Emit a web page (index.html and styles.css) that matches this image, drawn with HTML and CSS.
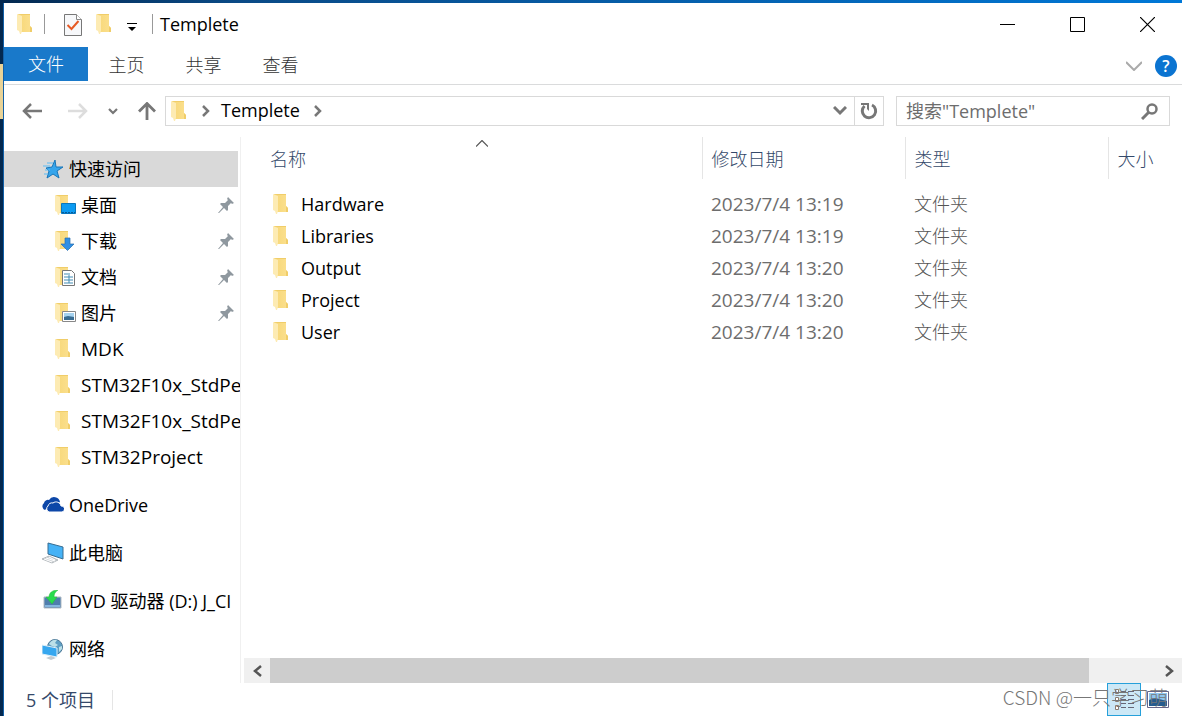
FILE: index.html
```html
<!DOCTYPE html>
<html lang="zh-CN">
<head>
<meta charset="utf-8">
<title>Templete</title>
<link rel="stylesheet" href="styles.css">
</head>
<body>
<svg class="defs" aria-hidden="true">
  <linearGradient id="gold"><stop offset="0" stop-color="#f7d777"/><stop offset="1" stop-color="#fbe08f"/></linearGradient>
  <symbol id="folder" viewBox="0 0 16 22"><path fill="url(#gold)" d="M1 1h12v12l2 2v4H4z"/><path fill="#fdebb3" d="M0 1l5 2v15l-1 3-1 0-1-3-2-1z"/><path fill="#f0cd69" d="M1 1h12v1H4zM13 13l2 2v4h-2z"/></symbol>
  <symbol id="pin" viewBox="0 0 16 16"><path fill="#8f989f" d="M10 0l6 6-2 1-1-1-3 3 0 4-1 1-3-3-5 5H0l5-6-3-3 1-1h4l3-3-1-1z"/></symbol>
</svg>
<div class="desktop">
<i class="desktop-icon"></i>
<main class="window">
  <header class="titlebar">
    <svg class="folder"><use href="#folder"/></svg>
    <i class="rule"></i>
    <button class="quick" aria-label="属性"><svg width="18" height="22" viewBox="0 0 18 22"><path d="M.5.5h12l5 5v16H.5z" fill="#f7f8fa" stroke="#777"/><path d="M12.500.5v5h5" fill="#fff" stroke="#888"/><path d="M3.500 11l4 4 7-8" fill="none" stroke="#e65a25" stroke-width="2"/></svg></button>
    <button class="quick second" aria-label="新建文件夹"><svg class="folder"><use href="#folder"/></svg></button>
    <button class="quick more" aria-label="自定义快速访问工具栏"><svg width="10" height="8" viewBox="0 0 10 8"><path d="M0 0h10v1H0zM1 4h8L5 8z"/></svg></button>
    <i class="rule"></i>
    <h1>Templete</h1>
    <div class="controls">
      <button aria-label="最小化"><svg width="15" height="15"><path d="M0 7.500h15" stroke="#000"/></svg></button>
      <button aria-label="最大化"><svg width="15" height="15"><path d="M.5.5h14v14H.5z" fill="none" stroke="#000"/></svg></button>
      <button aria-label="关闭"><svg width="15" height="15"><path d="M0 0l15 15M15 0L0 15" stroke="#000" stroke-width="1.200"/></svg></button>
    </div>
  </header>
  <nav class="ribbon">
    <button class="tab file">文件</button><button class="tab">主页</button><button class="tab">共享</button><button class="tab">查看</button>
    <button class="expand" aria-label="展开功能区"><svg width="16" height="10" viewBox="0 0 16 10"><path d="M0 1l8 8 8-8" fill="none" stroke="#aaa" stroke-width="2"/></svg></button>
    <button class="help" aria-label="帮助">?</button>
  </nav>
  <div class="address">
    <button class="nav back" aria-label="后退"><svg width="20" height="16" viewBox="0 0 20 16"><path d="M20 8H2M9 1L2 8l7 7" fill="none" stroke="#777" stroke-width="2.500"/></svg></button>
    <button class="nav forward" aria-label="前进"><svg width="20" height="16" viewBox="0 0 20 16"><path d="M0 8h18M11 1l7 7-7 7" fill="none" stroke="#ddd" stroke-width="2.500"/></svg></button>
    <button class="nav recent" aria-label="最近浏览的位置"><svg width="10" height="7" viewBox="0 0 10 7"><path d="M1 1l4 4 4-4" fill="none" stroke="#777" stroke-width="2.200"/></svg></button>
    <button class="nav up" aria-label="上移"><svg width="18" height="18" viewBox="0 0 18 18"><path d="M9 18V2M1 9.500L9 1.500l8 8" fill="none" stroke="#777" stroke-width="2.800"/></svg></button>
    <div class="crumbs">
      <svg class="folder"><use href="#folder"/></svg>
      <svg class="chev" width="8" height="12" viewBox="0 0 8 12"><path d="M1 1l5 5-5 5" fill="none" stroke="#777" stroke-width="2.500"/></svg>
      <a href="#">Templete</a>
      <svg class="chev" width="8" height="12" viewBox="0 0 8 12"><path d="M1 1l5 5-5 5" fill="none" stroke="#777" stroke-width="2.500"/></svg>
      <button class="history" aria-label="以前的位置"><svg width="14" height="10" viewBox="0 0 14 10"><path d="M1 1l6 6 6-6" fill="none" stroke="#777" stroke-width="3"/></svg></button>
      <button class="refresh" aria-label="刷新"><svg width="18" height="18" viewBox="0 0 18 18"><path d="M12 3A6.700 6.700 0 1 1 4.500 4" fill="none" stroke="#777" stroke-width="3"/><path d="M1 1h8v8L7 7V3H1z" fill="#777"/></svg></button>
    </div>
    <label class="search"><input type="text" placeholder="搜索&quot;Templete&quot;" aria-label="搜索"><svg width="17" height="17" viewBox="0 0 17 17"><circle cx="11" cy="6" r="4.500" fill="none" stroke="#777" stroke-width="2.500"/><path d="M8 9l-7 7" stroke="#777" stroke-width="3"/></svg></label>
  </div>
  <div class="content">
    <aside class="tree">
      <a href="#" class="item root selected"><svg class="icon" viewBox="0 0 22 22"><path d="M13 2l1 7h7l-6 4 2 7-6-4-6 4 2-7-3-3 6-1z" fill="#35a5ec" stroke="#1976b8"/><path d="M5 5h6M1 8h7M3 12h5M2 16h4" stroke="#5bbcf5" stroke-width="1.200"/></svg><span>快速访问</span></a>
      <a href="#" class="item"><svg class="icon" viewBox="0 0 22 22"><use href="#folder" width="16" height="22"/><path d="M6.500 9.500h14v10h-14z" fill="#0c9bf2" stroke="#0876bc"/><path d="M7 18.500h13" stroke="#075b99" stroke-dasharray="2 1"/></svg><span>桌面</span><svg class="pin"><use href="#pin"/></svg></a>
      <a href="#" class="item"><svg class="icon" viewBox="0 0 22 22"><use href="#folder" width="16" height="22"/><path d="M10 8h5v6h4l-6.500 6.500L6 14h4z" fill="#2f8fe5" stroke="#286fad" stroke-width=".7"/></svg><span>下载</span><svg class="pin"><use href="#pin"/></svg></a>
      <a href="#" class="item"><svg class="icon" viewBox="0 0 22 22"><use href="#folder" width="16" height="22"/><path d="M7.500 4.500h9l3 3v12h-12z" fill="#fff" stroke="#777"/><path d="M9 8h4M9 11h9M9 14h9M9 17h9M14 7v10" stroke="#438db5"/></svg><span>文档</span><svg class="pin"><use href="#pin"/></svg></a>
      <a href="#" class="item"><svg class="icon" viewBox="0 0 22 22"><use href="#folder" width="16" height="22"/><path d="M7.500 9.500h13v10h-13z" fill="#fff" stroke="#888"/><path d="M9 11h10v7H9z" fill="#a5d2ef"/><path d="M9 15l4-1 6 1v3H9z" fill="#376b91"/></svg><span>图片</span><svg class="pin"><use href="#pin"/></svg></a>
      <a href="#" class="item latin"><svg class="icon" viewBox="0 0 22 22"><use href="#folder" width="16" height="22"/></svg><span>MDK</span></a>
      <a href="#" class="item latin"><svg class="icon" viewBox="0 0 22 22"><use href="#folder" width="16" height="22"/></svg><span>STM32F10x_StdPe</span></a>
      <a href="#" class="item latin"><svg class="icon" viewBox="0 0 22 22"><use href="#folder" width="16" height="22"/></svg><span>STM32F10x_StdPe</span></a>
      <a href="#" class="item latin"><svg class="icon" viewBox="0 0 22 22"><use href="#folder" width="16" height="22"/></svg><span>STM32Project</span></a>
      <a href="#" class="item root"><svg class="icon" viewBox="0 0 22 22"><path d="M3 16a4 4 0 0 1-1-7 4 4 0 0 1 5-3 6 6 0 0 1 11 2l-3 2-5-1-4 4z" fill="#0d47a8"/><path d="M7 18a3.500 3.500 0 0 1-1-6 4 4 0 0 1 5-3 5 5 0 0 1 8 3 3 3 0 0 1 1 6z" fill="#0d47a8" stroke="#fff"/></svg><span>OneDrive</span></a>
      <a href="#" class="item root"><svg class="icon" viewBox="0 0 22 22"><path d="M6 1l15 4v12L6 12z" fill="#45b2f6" stroke="#386d91"/><path d="M0 17l7-3 9 4-6 3z" fill="#d3d7da" stroke="#8d969c" stroke-width=".6"/><path d="M2 17l8 3M4 16l9 3M7 15l6 3" stroke="#fff"/></svg><span>此电脑</span></a>
      <a href="#" class="item root"><svg class="icon" viewBox="0 0 22 22"><path d="M2 7h17v11H2z" fill="#4f7ead" stroke="#b1bbc4"/><path d="M3 16h15" stroke="#84b5dd" stroke-width="2"/><path d="M16 0c-6 0-9 3-9 7H4l6 7 5-7h-3c0-3 1-5 4-7z" fill="#27dc4e" stroke="#2fb53c" stroke-width=".5"/></svg><span>DVD 驱动器 (D:) J_CI</span></a>
      <a href="#" class="item root"><svg class="icon" viewBox="0 0 22 22"><circle cx="13" cy="9" r="7.500" fill="#5e9fc4" stroke="#4e7997"/><path d="M7 6c2-4 6-5 8-4l-2 3 3 2-3 2-3-1zM17 9l3-1v3l-3 3z" fill="#bce0e8"/><path d="M0 7l15 3v9L0 16z" fill="#36a7ef" stroke="#dceef8"/><path d="M4 20l5-2 5 2-5 2z" fill="#c3cbd0"/></svg><span>网络</span></a>
    </aside>
    <section class="files">
      <table>
        <colgroup><col class="name"><col class="date"><col class="type"><col></colgroup>
        <thead><tr><th>名称<svg class="sort" width="12" height="7" viewBox="0 0 12 7"><path d="M0 6.500l6-6 6 6" fill="none" stroke="#555" stroke-width="1.200"/></svg></th><th>修改日期</th><th>类型</th><th>大小</th></tr></thead>
        <tbody>
          <tr><td><a href="#" class="entry"><svg class="folder"><use href="#folder"/></svg>Hardware</a></td><td class="stamp">2023/7/4 13:19</td><td>文件夹</td><td></td></tr>
          <tr><td><a href="#" class="entry"><svg class="folder"><use href="#folder"/></svg>Libraries</a></td><td class="stamp">2023/7/4 13:19</td><td>文件夹</td><td></td></tr>
          <tr><td><a href="#" class="entry"><svg class="folder"><use href="#folder"/></svg>Output</a></td><td class="stamp">2023/7/4 13:20</td><td>文件夹</td><td></td></tr>
          <tr><td><a href="#" class="entry"><svg class="folder"><use href="#folder"/></svg>Project</a></td><td class="stamp">2023/7/4 13:20</td><td>文件夹</td><td></td></tr>
          <tr><td><a href="#" class="entry"><svg class="folder"><use href="#folder"/></svg>User</a></td><td class="stamp">2023/7/4 13:20</td><td>文件夹</td><td></td></tr>
        </tbody>
      </table>
      <div class="scrollbar">
        <button aria-label="向左滚动"><svg width="9" height="12" viewBox="0 0 9 12"><path d="M8 1L2 6l6 5" fill="none" stroke="#555" stroke-width="2.500"/></svg></button>
        <div class="track"><div class="thumb"></div></div>
        <button aria-label="向右滚动"><svg width="9" height="12" viewBox="0 0 9 12"><path d="M1 1l6 5-6 5" fill="none" stroke="#555" stroke-width="2.500"/></svg></button>
      </div>
    </section>
  </div>
  <footer class="status"><span class="count">5 个项目</span>
    <div class="views">
      <button class="view active" aria-label="详细信息"><svg width="20" height="24" viewBox="0 0 20 24"><path d="M1.500 1.500h3v4h-3zM1.500 9.500h3v4h-3zM1.500 17.500h3v4h-3z" fill="#fff" stroke="#8b7d70"/><path d="M7 3.500h5M14 3.500h6M7 7.500h5M14 7.500h6M7 11.500h5M14 11.500h6M7 15.500h5M14 15.500h6M7 19.500h5M14 19.500h6" stroke="#667"/></svg></button>
      <button class="view" aria-label="大图标"><svg width="22" height="17" viewBox="0 0 22 17"><path d="M.5.5h21v16H.5z" fill="#fff" stroke="#668"/><path d="M2 2h18v13H2z" fill="#8fc6f0"/><path d="M2 9l6-2 12 3v5H2z" fill="#265c8f"/></svg></button>
    </div>
    <span class="watermark">CSDN @一只学习萌</span>
  </footer>
</main>
</div>
</body>
</html>
```
FILE: styles.css
```css
* { box-sizing: border-box; }
body { margin: 0; font: 18px/24px "Open Sans", "Noto Sans CJK SC", sans-serif; color: #000; }
button { border: 0; padding: 0; background: none; font: inherit; color: inherit; display: flex; align-items: center; justify-content: center; }
a { color: inherit; text-decoration: none; }
svg { flex: none; }
.defs { position: absolute; width: 0; height: 0; }
.desktop { height: 100vh; padding: 3px 0 0 3px; background: linear-gradient(90deg, #03284f, #0a4a86 20%, #0078d7); overflow: hidden; }
.desktop-icon { position: absolute; left: 0; top: 64px; width: 3px; height: 55px; background: #e9d397; }
.window { height: 100%; background: #fff; border-left: 1px solid #1160a8; display: flex; flex-direction: column; }
.folder { width: 16px; height: 22px; }
.titlebar { height: 44px; display: flex; align-items: center; padding: 0 0 2px 13px; }
.rule { width: 1px; height: 20px; background: #999; margin-left: 11px; }
.quick { margin-left: 19px; }
.quick:not(.second):not(.more) { padding-top: 2px; }
.quick.second { margin-left: 14px; }
.quick.more { margin-left: 15px; padding-top: 6px; }
.quick.more + .rule { margin-left: 15px; }
h1 { margin: 0 0 0 7px; font: inherit; }
.controls { margin-left: auto; display: flex; }
.controls button { width: 70px; height: 42px; }
.ribbon { height: 38px; display: flex; align-items: center; border-bottom: 1px solid #dadbdc; color: #333; padding-right: 5px; }
.tab { width: 77px; height: 34px; margin-bottom: 3px; padding-top: 2px; font-weight: 300; }
.tab.file { width: 84px; padding-top: 0; background: #1979ca; color: #fff; }
.expand { margin-left: auto; }
.help { width: 22px; height: 22px; border-radius: 50%; background: #0b74d1; color: #fff; margin-left: 13px; font-size: 16px; font-weight: 600; }
.address { height: 52px; display: flex; align-items: center; padding: 0 12px 0 18px; }
.forward { margin-left: 26px; }
.recent { margin-left: 20px; }
.up { margin-left: 20px; }
.crumbs { flex: 1; height: 30px; border: 1px solid #d9d9d9; margin-left: 9px; display: flex; align-items: center; padding-left: 5px; }
.crumbs .chev { margin-left: 15px; }
.crumbs a { margin-left: 11px; padding-bottom: 2px; }
.crumbs a + .chev { margin-left: 14px; }
.history { margin-left: auto; width: 28px; height: 28px; }
.refresh { width: 29px; height: 28px; border-left: 1px solid #d9d9d9; }
.search { width: 274px; height: 30px; border: 1px solid #d9d9d9; margin-left: 12px; padding: 0 11px 0 9px; display: flex; align-items: center; }
.search input { flex: 1; min-width: 0; border: 0; padding: 0; font: inherit; outline: 0; background: none; }
.search input::placeholder { color: #6d6d6d; opacity: 1; }
.content { flex: 1; min-height: 0; display: flex; }
.tree { width: 237px; padding: 14px 2px 0 0; border-right: 1px solid #f0f0f0; overflow: hidden; }
.item { display: flex; align-items: center; height: 36px; padding-left: 51px; white-space: nowrap; }
.item .icon { width: 22px; height: 22px; margin-right: 4px; }
.item.latin { font-size: 19px; }
.item.root { padding-left: 38px; }
.item.root .icon { margin-right: 5px; }
.item + .item.root { margin-top: 12px; }
.selected { background: #d9d9d9; }
.pin { width: 16px; height: 16px; margin: 0 4px 0 auto; }
.files { flex: 1; min-width: 0; display: flex; flex-direction: column; padding-left: 3px; }
table { width: 100%; table-layout: fixed; border-collapse: collapse; }
.name { width: 458px; }
.date { width: 203px; }
.type { width: 203px; }
th { font-weight: 300; text-align: left; color: #34496a; height: 42px; padding: 2px 0 0 9px; border-right: 1px solid #e5e5e5; position: relative; }
th:first-child { padding-left: 26px; }
th:last-child { border-right: 0; }
.sort { position: absolute; left: 232px; top: 3px; }
tbody::before { content: ""; display: block; height: 9px; }
td { height: 32px; padding: 0 0 0 9px; color: #555; font-weight: 300; }
td:first-child { padding-left: 29px; color: #000; font-weight: 400; }
.stamp { font-size: 19px; font-weight: 400; color: #6d6d6d; }
.entry { display: flex; align-items: center; gap: 12px; }
.scrollbar { margin-top: auto; height: 25px; display: flex; background: #f0f0f0; }
.scrollbar button { width: 26px; height: 25px; }
.track { flex: 1; }
.thumb { width: 92.4%; height: 25px; background: #cdcdcd; }
.status { height: 33px; display: flex; align-items: center; padding-left: 22px; color: #35496a; position: relative; }
.count { padding-right: 17px; border-right: 1px solid #e5e5e5; line-height: 20px; }
.views { margin-left: auto; display: flex; height: 33px; padding-right: 7px; }
.view { width: 34px; }
.view.active { background: #cce8f6; border: 1px solid #26a0da; }
.watermark { position: absolute; right: 14px; top: 2px; color: #777; font: 300 19px/24px "Noto Sans CJK SC", sans-serif; }
```
